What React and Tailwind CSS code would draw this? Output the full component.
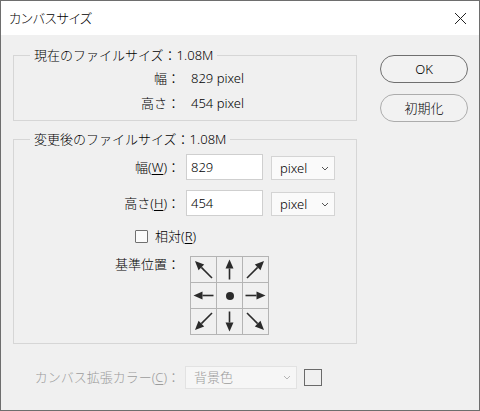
import React from 'react'

const Chevron = ({ color = '#555' }) => (
    <svg width="8" height="5" viewBox="0 0 8 5" className="shrink-0">
        <path d="M1 1 L4 4 L7 1" fill="none" stroke={color} strokeWidth="1" />
    </svg>
)

// arrow for the anchor grid, dx/dy is the direction it points
const Arrow = ({ dx, dy }) => {
    const c = 12.5
    const diag = dx !== 0 && dy !== 0
    const len = diag ? 8.5 : 10
    const tip = [c + dx * len, c + dy * len]
    const tail = [c - dx * len, c - dy * len]
    const n = Math.hypot(dx, dy)
    const ux = dx / n
    const uy = dy / n
    const base = [tip[0] - ux * 9, tip[1] - uy * 9]
    const p1 = [base[0] - uy * 4, base[1] + ux * 4]
    const p2 = [base[0] + uy * 4, base[1] - ux * 4]
    return (
        <svg width="25" height="25" viewBox="0 0 25 25">
            <line x1={tail[0]} y1={tail[1]} x2={base[0]} y2={base[1]} stroke="#2b2b2b" strokeWidth="1.6" />
            <polygon points={`${tip[0]},${tip[1]} ${p1[0]},${p1[1]} ${p2[0]},${p2[1]}`} fill="#2b2b2b" />
        </svg>
    )
}

const cells = [
    [-1, -1], [0, -1], [1, -1],
    [-1, 0], null, [1, 0],
    [-1, 1], [0, 1], [1, 1],
]

export default function App() {
    return (
        <div className="w-[480px] h-[411px] border border-[#6e6e6e] bg-[#f0f0f0] flex flex-col text-[13px] font-light text-black font-['Noto_Sans','Noto_Sans_CJK_JP',sans-serif] leading-[20px]">
            {/* Title bar */}
            <div className="h-[34px] bg-white flex items-center justify-between pl-[8px] pr-[12px] shrink-0">
                <span className="[font-feature-settings:'palt']">カンバスサイズ</span>
                <svg width="13" height="13" viewBox="0 0 13 13">
                    <path d="M1 1 L12 12 M12 1 L1 12" stroke="#222" strokeWidth="1" />
                </svg>
            </div>

            <div className="flex pl-[12px] pt-[10px]">
                {/* Left column */}
                <div className="w-[344px]">
                    <fieldset className="border border-[#d6d6d6]">
                        <legend className="ml-[16px] px-[4px] leading-[20px]">現在のファイルサイズ：1.08M</legend>
                        <div className="pb-[5px]">
                            <div className="h-[25px] flex items-center">
                                <span className="w-[166px] text-right">幅：</span>
                                <span className="ml-[11px]">829 pixel</span>
                            </div>
                            <div className="h-[25px] flex items-center">
                                <span className="w-[166px] text-right">高さ：</span>
                                <span className="ml-[11px]">454 pixel</span>
                            </div>
                        </div>
                    </fieldset>

                    <fieldset className="mt-[8px] border border-[#d6d6d6]">
                        <legend className="ml-[16px] px-[4px] leading-[20px]">変更後のファイルサイズ：1.08M</legend>
                        <div className="pb-[8px]">
                            <div className="mt-[5px] h-[26px] flex items-center">
                                <span className="w-[166px] text-right">幅(<u className="underline-offset-2">W</u>)：</span>
                                <div className="ml-[6px] w-[77px] h-[26px] bg-white border border-[#cfcfcf] flex items-center pl-[4px]">829</div>
                                <div className="ml-[8px] w-[64px] h-[24px] mt-[2px] bg-[#fafafa] border border-[#d4d4d4] flex items-center justify-between pl-[8px] pr-[5px]">
                                    <span>pixel</span>
                                    <Chevron />
                                </div>
                            </div>
                            <div className="mt-[10px] h-[26px] flex items-center">
                                <span className="w-[166px] text-right">高さ(<u className="underline-offset-2">H</u>)：</span>
                                <div className="ml-[6px] w-[77px] h-[26px] bg-white border border-[#cfcfcf] flex items-center pl-[4px]">454</div>
                                <div className="ml-[8px] w-[64px] h-[24px] mt-[2px] bg-[#fafafa] border border-[#d4d4d4] flex items-center justify-between pl-[8px] pr-[5px]">
                                    <span>pixel</span>
                                    <Chevron />
                                </div>
                            </div>
                            <div className="mt-[10px] h-[20px] flex items-center">
                                <div className="ml-[121px] w-[13px] h-[13px] border border-[#707070] bg-[#fbfbfb] rounded-[1px]" />
                                <span className="ml-[7px]">相対(<u className="underline-offset-2">R</u>)</span>
                            </div>
                            <div className="mt-[10px] flex items-start">
                                <span className="w-[166px] text-right leading-[16px]">基準位置：</span>
                                <div className="ml-[10px] grid grid-cols-[25px_25px_25px] gap-px p-px bg-[#b4b4b4]">
                                    {cells.map((d, i) => (
                                        <div key={i} className="w-[25px] h-[25px] bg-[#f0f0f0] flex items-center justify-center">
                                            {d ? <Arrow dx={d[0]} dy={d[1]} /> : <div className="w-[8px] h-[8px] rounded-full bg-[#2b2b2b]" />}
                                        </div>
                                    ))}
                                </div>
                            </div>
                        </div>
                    </fieldset>

                    {/* Canvas extension colour (disabled) */}
                    <div className="mt-[21px] h-[24px] flex items-center text-[#9c9c9c]">
                        <span className="w-[167px] text-right">カンバス拡張カラー(<u className="underline-offset-2">C</u>)：</span>
                        <div className="ml-[5px] w-[112px] h-[23px] bg-[#f6f6f6] border border-[#e2e2e2] flex items-center justify-between pl-[8px] pr-[5px]">
                            <span>背景色</span>
                            <Chevron color="#b5b5b5" />
                        </div>
                        <div className="ml-[7px] w-[18px] h-[17px] border border-[#6a6a6a] bg-[#f0f0f0]" />
                    </div>
                </div>

                {/* Buttons */}
                <div className="ml-[23px] mt-[10px] flex flex-col gap-[11px]">
                    <button className="w-[88px] h-[28px] rounded-full border border-[#6f6f6f] bg-[#f2f2f2] flex items-center justify-center">OK</button>
                    <button className="w-[88px] h-[28px] rounded-full border border-[#acacac] bg-[#f2f2f2] flex items-center justify-center">初期化</button>
                </div>
            </div>
        </div>
    )
}
